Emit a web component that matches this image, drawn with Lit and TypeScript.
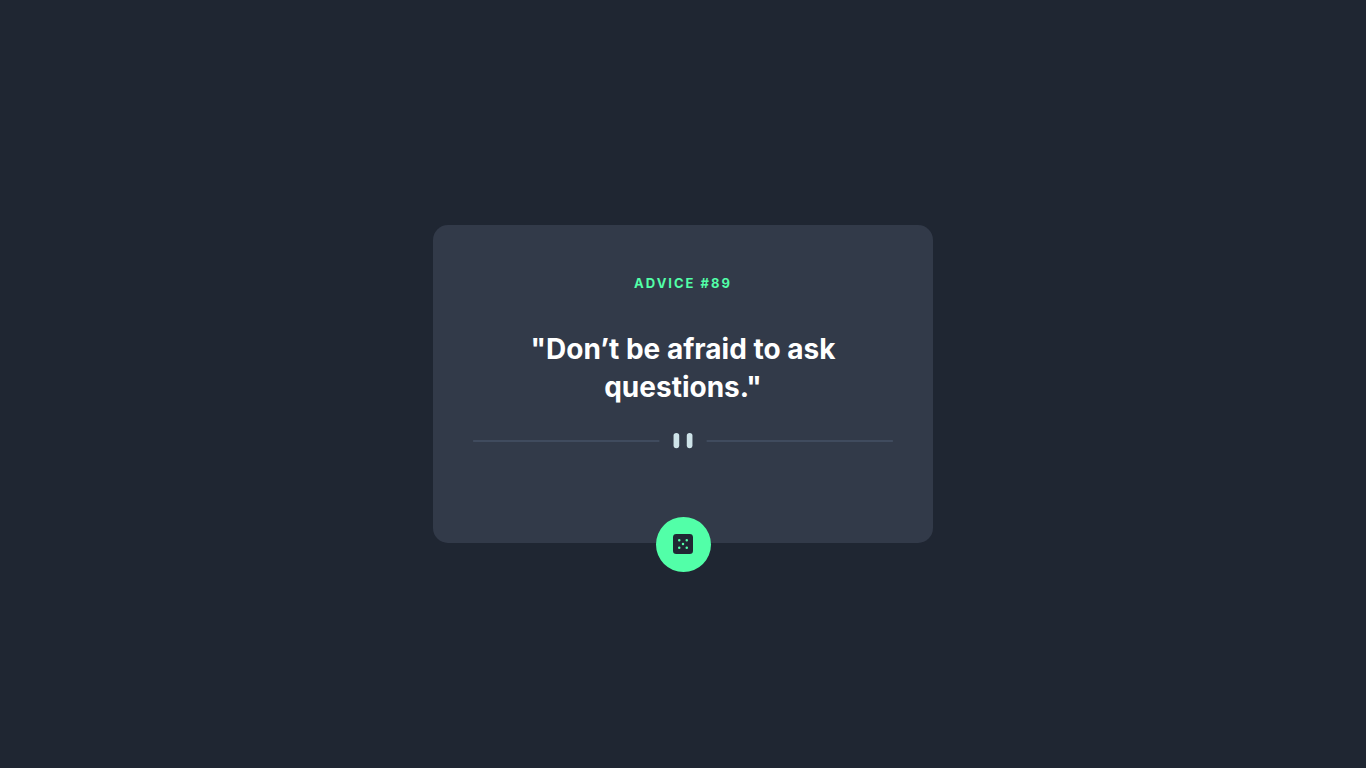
import { LitElement, html, css } from "lit";
import { customElement, state } from "lit/decorators.js";

@customElement("app-root")
export class AppRoot extends LitElement {
  @state() private advice = { id: 89, text: "Don’t be afraid to ask questions." };

  static styles = css`
    :host {
      display: grid;
      place-items: center;
      min-height: 100vh;
      padding: 40px 16px;
      box-sizing: border-box;
      background: #1f2632;
      font-family: Inter, "Liberation Sans", sans-serif;
      text-align: center;
    }
    .card {
      position: relative;
      box-sizing: border-box;
      width: 100%;
      max-width: 500px;
      padding: 48px 40px 94px;
      border-radius: 15px;
      background: #323a49;
    }
    .label {
      margin: 0 0 37px;
      color: #52ffa8;
      font-size: 13px;
      font-weight: 700;
      line-height: 20px;
      letter-spacing: 2px;
    }
    .quote {
      margin: 0 0 27px;
      padding: 0 40px;
      color: #fff;
      font-size: 28px;
      font-weight: 700;
      line-height: 38px;
    }
    .divider {
      display: block;
      width: 100%;
      height: auto;
    }
    .dice {
      position: absolute;
      left: 0;
      right: 0;
      bottom: -29px;
      margin: 0 auto;
      display: grid;
      place-items: center;
      width: 55px;
      height: 55px;
      padding: 0;
      border: 0;
      border-radius: 50%;
      background: #52ffa8;
      cursor: pointer;
    }
    .dice:hover {
      box-shadow: 0 0 32px #52ffa8;
    }
    .icon {
      width: 20px;
      height: 20px;
    }
  `;

  render() {
    return html`
      <main class="card">
        <h1 class="label">${`ADVICE #${this.advice.id}`}</h1>
        <p class="quote">${`"${this.advice.text}"`}</p>
        <svg class="divider" viewBox="0 0 444 16" aria-hidden="true">
          <path fill="#4f5d74" d="M0 8h197v1H0zM247 8h197v1H247z" />
          <g transform="translate(212)" fill="#cee3e9">
            <rect width="6" height="16" rx="3" />
            <rect x="14" width="6" height="16" rx="3" />
          </g>
        </svg>
        <button class="dice" type="button" aria-label="New advice">
          <svg class="icon" viewBox="0 0 24 24" aria-hidden="true">
            <path
              fill="#202733"
              d="M20 0H4a4.005 4.005 0 0 0-4 4v16a4.005 4.005 0 0 0 4 4h16a4.005 4.005 0 0 0 4-4V4a4.005 4.005 0 0 0-4-4ZM7.5 18a1.5 1.5 0 1 1 0-3 1.5 1.5 0 0 1 0 3Zm0-9a1.5 1.5 0 1 1 0-3 1.5 1.5 0 0 1 0 3Zm4.5 4.5a1.5 1.5 0 1 1 0-3 1.5 1.5 0 0 1 0 3Zm4.5 4.5a1.5 1.5 0 1 1 0-3 1.5 1.5 0 0 1 0 3Zm0-9a1.5 1.5 0 1 1 0-3 1.5 1.5 0 0 1 0 3Z"
            />
          </svg>
        </button>
      </main>
    `;
  }
}
